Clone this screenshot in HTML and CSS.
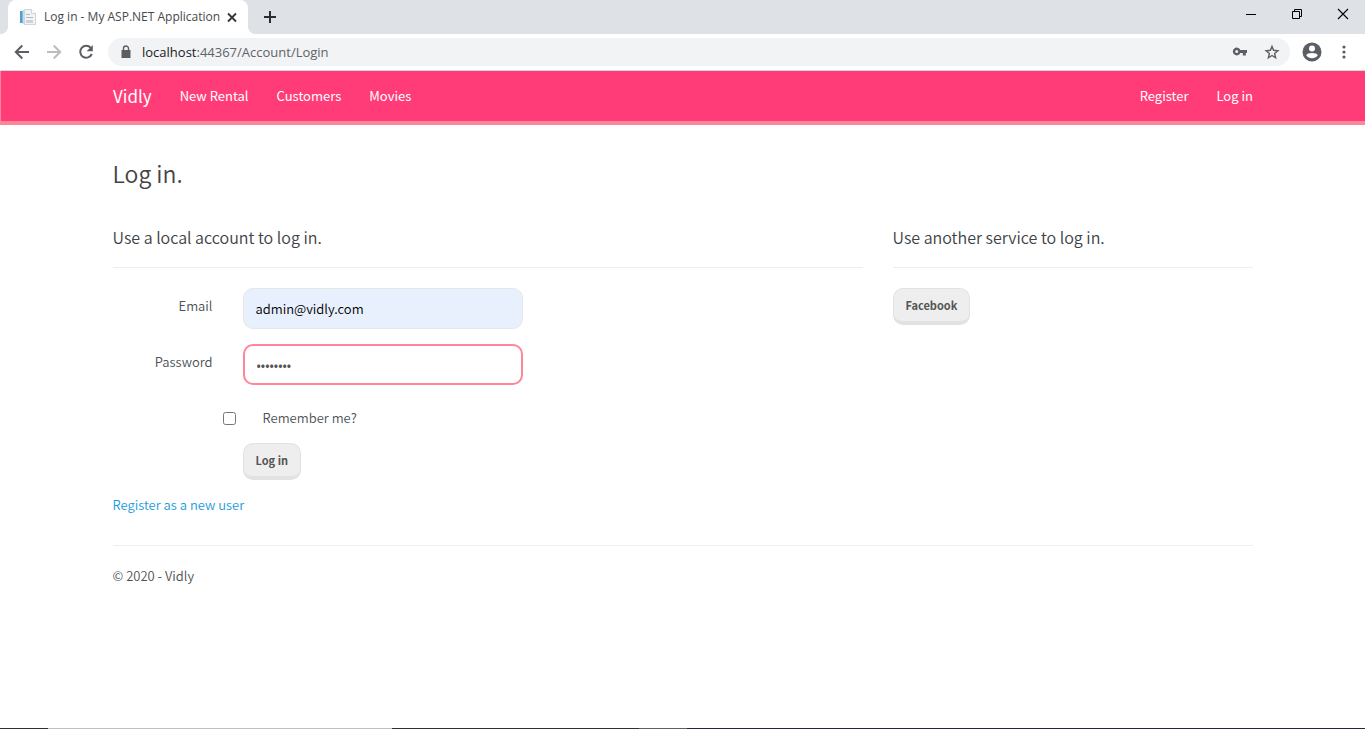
FILE: index.html
```html
<!DOCTYPE html>
<html lang="en">
<head>
<meta charset="utf-8">
<title>Log in - My ASP.NET Application</title>
<link rel="stylesheet" href="styles.css">
</head>
<body>
<div class="browser">
  <header class="tab-strip">
    <div class="tab">
      <svg class="favicon" width="16" height="16" viewBox="0 0 16 16" aria-hidden="true">
        <path d="M0 2h4v12H0z" fill="#4ba0cf"/><path d="M2.500 1h2v14h-2z" fill="#c4dcea"/>
        <path d="M4.500.500h7l4 4v11h-11z" fill="#f1f3f5" stroke="#cfd5db"/>
        <path d="M11.500.500v4h4" fill="#fff" stroke="#cfd5db"/>
        <path d="M6 5.500h4M6 8.500h7" stroke="#aebac3"/><path d="M6 11h7v3H6z" fill="#ccd2d7"/>
      </svg>
      <span class="tab-title">Log in - My ASP.NET Application</span>
      <button class="icon-button" aria-label="Close tab"><svg width="16" height="16" viewBox="0 0 16 16"><path d="M4 4.500l8 8M12 4.500l-8 8" stroke="#333639" stroke-width="1.800"/></svg></button>
    </div>
    <button class="icon-button new-tab" aria-label="New tab"><svg width="16" height="16" viewBox="0 0 16 16"><path d="M8 2v12M2 8h12" stroke="#2b2e31" stroke-width="2"/></svg></button>
    <div class="window-controls">
      <button class="icon-button" aria-label="Minimize"><svg width="16" height="16" viewBox="0 0 16 16"><path d="M3 8.500h10" stroke="#000"/></svg></button>
      <button class="icon-button" aria-label="Restore"><svg width="16" height="16" viewBox="0 0 16 16"><path d="M3.500 5.500h7v7h-7zM5.500 5v-1.500h7v7H11" fill="none" stroke="#000"/></svg></button>
      <button class="icon-button" aria-label="Close window"><svg width="16" height="16" viewBox="0 0 16 16"><path d="M3 3l10 10M13 3L3 13" stroke="#000" stroke-width="1.100"/></svg></button>
    </div>
  </header>
  <div class="toolbar">
    <button class="icon-button" aria-label="Back"><svg width="16" height="16" viewBox="0 0 16 16"><path d="M15 8H2M8.300 1.500L1.800 8l6.500 6.500" fill="none" stroke="#5b5f64" stroke-width="2"/></svg></button>
    <button class="icon-button" aria-label="Forward"><svg width="16" height="16" viewBox="0 0 16 16"><path d="M1 8h13M7.700 1.500L14.200 8l-6.500 6.500" fill="none" stroke="#babcbe" stroke-width="2"/></svg></button>
    <button class="icon-button" aria-label="Reload"><svg width="16" height="16" viewBox="0 0 16 16"><path d="M12.800 3.800A6 6 0 1 0 13.800 10" fill="none" stroke="#5b5f64" stroke-width="2"/><path d="M14.800 1v6.200H8.600z" fill="#5b5f64"/></svg></button>
    <div class="address">
      <svg width="16" height="16" viewBox="0 0 16 16" aria-hidden="true"><path d="M3.500 6h9v8h-9z" fill="#5b5f64"/><path d="M5.500 6.500V4.500a2.500 2.500 0 0 1 5 0v2" fill="none" stroke="#5b5f64" stroke-width="1.400"/></svg>
      <span class="url"><span class="host">localhost</span>:44367/Account/Login</span>
      <button class="icon-button" aria-label="Saved passwords"><svg width="16" height="16" viewBox="0 0 16 16"><path fill-rule="evenodd" d="M8.300 6H15v3h-1.200v2.500h-3V9H8.300A3.900 3.900 0 1 1 8.300 6zM4.700 6a1.500 1.500 0 1 0 0 3 1.500 1.500 0 0 0 0-3z" fill="#5b5f64"/></svg></button>
      <button class="icon-button" aria-label="Bookmark"><svg width="16" height="16" viewBox="0 0 16 16"><path d="M8 2.400l1.600 3.900 4.300.4-3.300 2.800 1 4.300L8 11.500l-3.600 2.300 1-4.300-3.300-2.800 4.300-.4z" fill="none" stroke="#5b5f64" stroke-width="1.400"/></svg></button>
    </div>
    <button class="icon-button profile" aria-label="Profile"><svg width="20" height="20" viewBox="0 0 20 20"><circle cx="10" cy="10" r="9.500" fill="#5b5f64"/><circle cx="10" cy="6.600" r="3" fill="#fff"/><path d="M4.200 13.200c1-2.800 10.600-2.800 11.600 0a7 7 0 0 1-11.600 0z" fill="#fff"/></svg></button>
    <button class="icon-button" aria-label="Menu"><svg width="16" height="16" viewBox="0 0 16 16"><g fill="#5b5f64"><circle cx="8" cy="3" r="1.600"/><circle cx="8" cy="8" r="1.600"/><circle cx="8" cy="13" r="1.600"/></g></svg></button>
  </div>

  <div class="page">
    <nav class="navbar">
      <div class="container nav-inner">
        <a class="brand" href="#">Vidly</a>
        <a href="#">New Rental</a>
        <a href="#">Customers</a>
        <a href="#">Movies</a>
        <a class="nav-right" href="#">Register</a>
        <a href="#">Log in</a>
      </div>
    </nav>
    <div class="container">
      <h2>Log in.</h2>
      <main class="columns">
        <section>
          <h4>Use a local account to log in.</h4>
          <hr>
          <form class="login-form">
            <label for="email">Email</label>
            <input class="field autofilled" id="email" type="email" value="admin@vidly.com">
            <label for="password">Password</label>
            <input class="field focused" id="password" type="password" value="password">
            <div class="remember">
              <input id="remember" type="checkbox">
              <label for="remember">Remember me?</label>
            </div>
            <button class="btn submit" type="button">Log in</button>
          </form>
          <a class="register" href="#">Register as a new user</a>
        </section>
        <section>
          <h4>Use another service to log in.</h4>
          <hr>
          <button class="btn" type="button">Facebook</button>
        </section>
      </main>
      <hr>
      <footer>© 2020 - Vidly</footer>
    </div>
  </div>
  <div class="taskbar"></div>
</div>
</body>
</html>
```
FILE: styles.css
```css
* { box-sizing: border-box; }

body {
  margin: 0;
  color: #4c5256;
  background: #fff;
  font: 350 13px/20px "Noto Sans CJK JP", "Noto Sans CJK SC", sans-serif;
}

.browser {
  display: flex;
  flex-direction: column;
  min-height: 100vh;
}

/* Browser window */
.icon-button {
  display: flex;
  padding: 0;
  border: 0;
  background: none;
}

.tab-strip {
  display: flex;
  align-items: center;
  height: 34px;
  padding-left: 8px;
  background: #dee1e6;
}

.tab {
  position: relative;
  display: flex;
  align-items: center;
  align-self: stretch;
  width: 240px;
  padding: 0 8px 0 12px;
  gap: 4px;
  border-radius: 8px 8px 0 0;
  background: #fff;
}

.tab::before,
.tab::after {
  content: "";
  position: absolute;
  bottom: 0;
  width: 8px;
  height: 8px;
}

.tab::before {
  right: 100%;
  background: radial-gradient(circle at 0 0, #dee1e6 8px, #fff 8px);
}

.tab::after {
  left: 100%;
  background: radial-gradient(circle at 100% 0, #dee1e6 8px, #fff 8px);
}

.favicon {
  flex: none;
  margin-right: 4px;
}

.tab-title {
  flex: 1;
  color: #45494d;
  font: 12px/16px "Open Sans", sans-serif;
  white-space: nowrap;
}

.new-tab { margin-left: 14px; }

.window-controls {
  display: flex;
  gap: 30px;
  margin: 0 14px 6px auto;
}

.toolbar {
  display: flex;
  align-items: center;
  gap: 16px;
  height: 37px;
  padding: 0 13px 0 14px;
  border-bottom: 1px solid #d5d7da;
}

.address {
  display: flex;
  flex: 1;
  align-items: center;
  gap: 16px;
  height: 28px;
  margin: 0 -4px 0 -2px;
  padding: 0 10px;
  border-radius: 14px;
  background: #f1f3f4;
}

.url {
  flex: 1;
  margin-left: -8px;
  color: #5f6368;
  font: 13px/20px "Open Sans", sans-serif;
}

.host { color: #202124; }

.profile { margin-right: -2px; }

/* Site */
.page { flex: 1; }

.container {
  max-width: 1170px;
  margin: 0 auto;
  padding: 0 15px;
}

.navbar {
  border-left: 1px solid #ff8598;
  border-bottom: 4px solid #ff8598;
  background: #ff3c78;
}

.nav-inner {
  display: flex;
  align-items: center;
  gap: 28px;
  height: 50px;
}

.nav-inner a {
  color: #fff;
  font-weight: 400;
  text-decoration: none;
}

.nav-inner .brand { font-size: 17px; }

.nav-inner .nav-right { margin-left: auto; }

h2 {
  margin: 34px 0 0;
  color: #444;
  font-size: 23px;
  font-weight: 350;
  line-height: 28px;
}

.columns {
  display: grid;
  grid-template-columns: 25fr 12fr;
  gap: 30px;
  padding-top: 40px;
}

h4 {
  margin: 0;
  color: #3c4246;
  font-size: 16px;
  font-weight: 350;
  line-height: 20px;
}

hr {
  margin: 20px 0;
  border: 0;
  border-top: 1px solid #eee;
}

.login-form {
  display: grid;
  grid-template-columns: 100px 280px;
  column-gap: 30px;
  row-gap: 15px;
}

.login-form > label {
  padding-top: 8px;
  text-align: right;
}

.field {
  width: 100%;
  height: 41px;
  padding: 0 12px;
  border: 1px solid #e7e7e7;
  border-radius: 10px;
  outline: 0;
  color: #555;
  background: #fff;
  font: inherit;
}

.autofilled {
  color: #000;
  background: #e8f0fe;
}

.focused { border: 2px solid #ff8598; }

.remember {
  display: flex;
  grid-column: 2;
  align-items: center;
  gap: 27px;
  margin: 8px 0 0 -20px;
}

.remember input {
  width: 13px;
  height: 13px;
  margin: 0;
}

.btn {
  height: 37px;
  padding: 0 12px;
  border: 1px solid #e2e2e2;
  border-bottom-width: 4px;
  border-radius: 10px;
  color: #555;
  background: #eee;
  font: bold 11px/16px "Noto Sans CJK JP", "Noto Sans CJK SC", sans-serif;
}

.submit {
  grid-column: 2;
  justify-self: start;
}

.register {
  display: block;
  margin: 15px 0 10px;
  color: #1b9bdb;
  text-decoration: none;
}

/* Top edge of the desktop taskbar */
.taskbar {
  height: 1px;
  background: linear-gradient(90deg, #263337 48px, #c0c0c0 48px 392px, #263337 392px 639px, #586464 639px 687px, #20293a 687px);
}
```
